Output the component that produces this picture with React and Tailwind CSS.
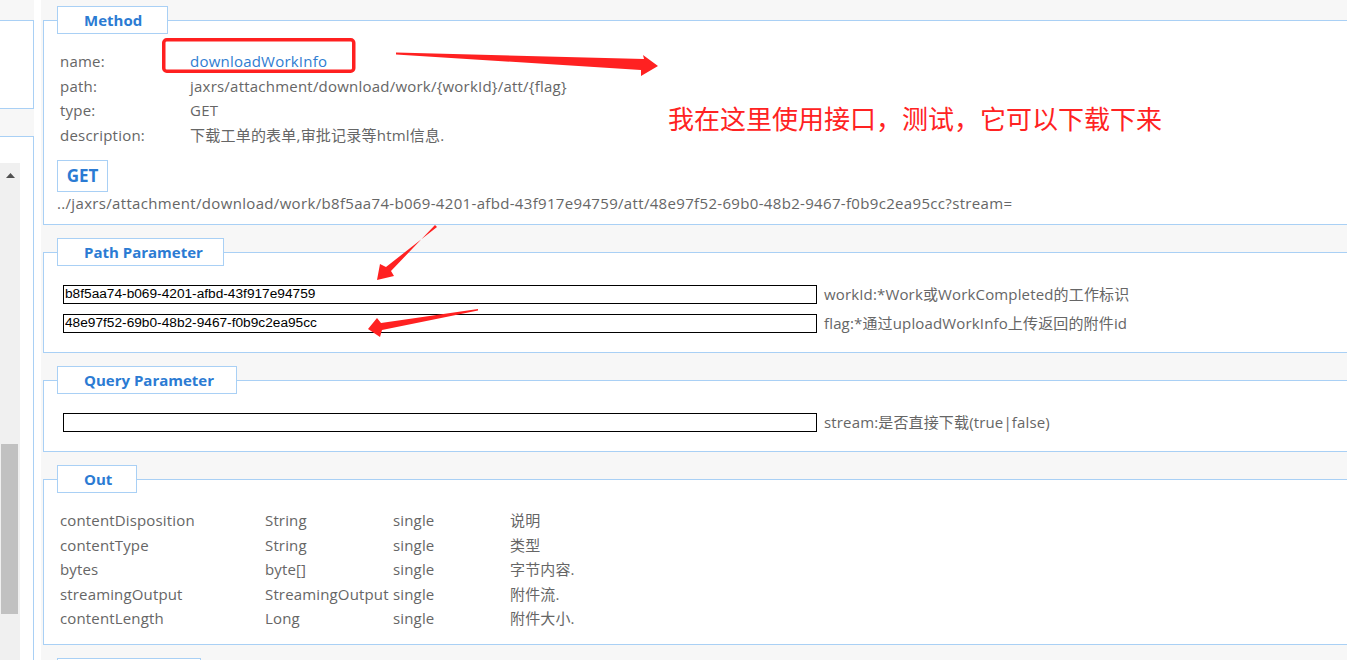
import React from 'react'

const font = { fontFamily: '"Open Sans", "Noto Sans CJK SC", sans-serif' }

const Legend = ({ w, children }) => (
  <legend className={`ml-[13px] h-[28px] ${w} border border-[#a9d0f5] bg-white pl-[26px] text-[15px] font-bold leading-[26px] text-[#2b7bd3]`}>
    {children}
  </legend>
)

const Section = ({ legendW, title, children, className = '' }) => (
  <fieldset className={`border border-r-0 border-[#a9d0f5] bg-white ${className}`}>
    <Legend w={legendW}>{title}</Legend>
    {children}
  </fieldset>
)

const ParamRow = ({ value, desc }) => (
  <div className="flex h-[29px] items-center pl-[19px]">
    <input
      readOnly
      defaultValue={value}
      className="h-[19px] w-[754px] border border-black bg-white pl-[1px] text-[13.7px] text-black outline-none"
      style={{ fontFamily: '"Liberation Sans", Arial, sans-serif' }}
    />
    <span className="ml-[7px] whitespace-nowrap text-[15px] tracking-[0.15px] text-[#666]">{desc}</span>
  </div>
)

const outRows = [
  ['contentDisposition', 'String', 'single', '说明'],
  ['contentType', 'String', 'single', '类型'],
  ['bytes', 'byte[]', 'single', '字节内容.'],
  ['streamingOutput', 'StreamingOutput', 'single', '附件流.'],
  ['contentLength', 'Long', 'single', '附件大小.'],
]

const methodRows = [
  ['name:', 'downloadWorkInfo'],
  ['path:', 'jaxrs/attachment/download/work/{workId}/att/{flag}'],
  ['type:', 'GET'],
  ['description:', '下载工单的表单,审批记录等html信息.'],
]

export default function App() {
  return (
    <div className="relative flex h-[660px] w-[1347px] overflow-hidden bg-[#f7f7f7]" style={font}>
      {/* left tree panel */}
      <div className="flex w-[34px] shrink-0 flex-col">
        <div className="mt-[20px] h-[89px] border-y border-r border-[#a9d0f5] bg-white" />
        <div className="mt-[27px] flex flex-1 flex-col border-t border-r border-[#a9d0f5] bg-white">
          <div className="mt-[26px] flex w-[20px] flex-1 flex-col bg-[#f0f0f0]">
            <div className="flex h-[24px] items-center justify-center">
              <svg width="9" height="5" viewBox="0 0 9 5">
                <polygon points="4.5,0 9,5 0,5" fill="#505050" />
              </svg>
            </div>
            <div className="ml-[1px] mt-[257px] h-[170px] w-[17px] bg-[#c1c1c1]" />
          </div>
        </div>
      </div>
      <div className="w-[7px] shrink-0 bg-white" />

      {/* main */}
      <div className="flex flex-1 flex-col gap-[13px] pl-[2px] pt-[6px] text-[15px] text-[#666]">
        <Section legendW="w-[111px]" title="Method">
          <div className="pt-[15px] pl-[16px]">
            {methodRows.map(([k, v], i) => (
              <div key={k} className="flex h-[24.5px] items-center whitespace-nowrap tracking-[0.22px]">
                <span className="w-[130px]">{k}</span>
                <span className={i === 0 ? 'text-[#2f7dd1]' : ''}>{v}</span>
              </div>
            ))}
          </div>
          <div className="pl-[13px] pb-[10px]">
            <div className="mt-[13px] flex h-[32px] w-[51px] items-center justify-center border border-[#a9d0f5] text-[17px] font-bold text-[#2b7bd3]">
              GET
            </div>
            <div className="h-[22px] whitespace-nowrap leading-[22px] tracking-[0.33px]">
              ../jaxrs/attachment/download/work/b8f5aa74-b069-4201-afbd-43f917e94759/att/48e97f52-69b0-48b2-9467-f0b9c2ea95cc?stream=
            </div>
          </div>
        </Section>

        <Section legendW="w-[167px]" title="Path Parameter">
          <div className="pt-[14px] pb-[14px]">
            <ParamRow value="b8f5aa74-b069-4201-afbd-43f917e94759" desc="workId:*Work或WorkCompleted的工作标识" />
            <ParamRow value="48e97f52-69b0-48b2-9467-f0b9c2ea95cc" desc="flag:*通过uploadWorkInfo上传返回的附件id" />
          </div>
        </Section>

        <Section legendW="w-[180px]" title="Query Parameter">
          <div className="pt-[14px] pb-[14px]">
            <ParamRow value="" desc="stream:是否直接下载(true|false)" />
          </div>
        </Section>

        <Section legendW="w-[80px]" title="Out">
          <div className="pt-[15px] pb-[13px] pl-[16px]">
            {outRows.map((r) => (
              <div key={r[0]} className="grid h-[24.5px] grid-cols-[205px_128px_117px_auto] items-center whitespace-nowrap">
                {r.map((c, i) => (
                  <span key={i} className="tracking-[0.15px]">{c}</span>
                ))}
              </div>
            ))}
          </div>
        </Section>

        <Section legendW="w-[144px]" title="" className="h-[40px]" />
      </div>

      {/* annotations drawn over the screenshot */}
      <svg className="pointer-events-none absolute left-0 top-0" width="1347" height="660" viewBox="0 0 1347 660">
        <rect x="163.75" y="39.75" width="190" height="31.5" rx="3" fill="none" stroke="#ff2020" strokeWidth="3.5" />
        <polygon points="396,52.5 644,59 643,55 658,66 641,76 641,70 396,54.5" fill="#ff2121" />
        <polygon points="435,225 391,271 394,276 377,280 380,264 386,267 437,227" fill="#ff2121" />
        <polygon points="478,309 381,323 377,318 368,329 380,337 382,330 478,310.5" fill="#ff2121" />
      </svg>
      <div
        className="pointer-events-none absolute left-[668px] top-[101px] whitespace-nowrap text-[26px] leading-[34px] text-[#ff2222]"
        style={{ fontFamily: '"Noto Sans CJK SC", sans-serif' }}
      >
        我在这里使用接口，测试，它可以下载下来
      </div>
    </div>
  )
}
